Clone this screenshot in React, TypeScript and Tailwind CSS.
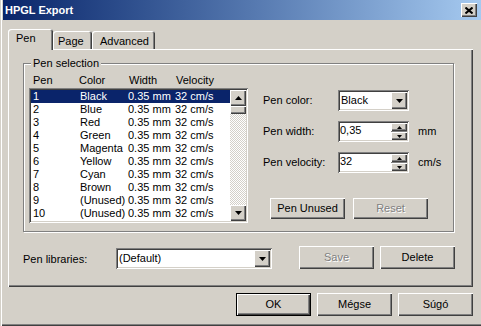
import React from 'react';

const raised = 'shadow-[inset_1px_1px_#fff,inset_-1px_-1px_#404040,inset_-2px_-2px_#808080]';
const sunken = 'shadow-[inset_1px_1px_#808080,inset_-1px_-1px_#fff,inset_2px_2px_#404040,inset_-2px_-2px_#d4d0c8]';

const pens = [
  ['1', 'Black'],
  ['2', 'Blue'],
  ['3', 'Red'],
  ['4', 'Green'],
  ['5', 'Magenta'],
  ['6', 'Yellow'],
  ['7', 'Cyan'],
  ['8', 'Brown'],
  ['9', '(Unused)'],
  ['10', '(Unused)'],
];

const Arrow = ({ up = false, w = 7, h = 4 }: { up?: boolean; w?: number; h?: number }) => (
  <svg width={w} height={h} viewBox={`0 0 ${w} ${h}`}>
    <polygon points={up ? `0,${h} ${w},${h} ${w / 2},0` : `0,0 ${w},0 ${w / 2},${h}`} fill="#000" />
  </svg>
);

const Button = ({ label, disabled, w = 'w-[75px]', h = 'h-[23px]' }: { label: string; disabled?: boolean; w?: string; h?: string }) => (
  <div className={`${w} ${h} ${raised} bg-[#d4d0c8] flex items-center justify-center font-normal`}>
    <span className={disabled ? 'text-[#808080] [text-shadow:1px_1px_#fff]' : 'text-black'}>{label}</span>
  </div>
);

const Combo = ({ value, w }: { value: string; w: string }) => (
  <div className={`${w} h-[21px] bg-white ${sunken} flex items-center pl-[3px] pr-[2px]`}>
    <span className="flex-1">{value}</span>
    <div className={`w-[16px] h-[17px] bg-[#d4d0c8] ${raised} flex items-center justify-center`}>
      <Arrow />
    </div>
  </div>
);

const Spinner = ({ value }: { value: string }) => (
  <div className={`w-[71px] h-[21px] bg-white ${sunken} flex pl-[2px] pr-[2px] py-[2px]`}>
    <span className="flex-1 pt-[1px]">{value}</span>
    <div className="w-[16px] flex flex-col">
      <div className={`h-[8px] bg-[#d4d0c8] ${raised} flex items-center justify-center`}>
        <Arrow up w={5} h={3} />
      </div>
      <div className="h-[1px] bg-[#808080]" />
      <div className={`h-[8px] bg-[#d4d0c8] ${raised} flex items-center justify-center`}>
        <Arrow w={5} h={3} />
      </div>
    </div>
  </div>
);

export default function App() {
  return (
    <div className="w-[481px] h-[326px] bg-[#d4d0c8] pl-[3px] font-['Liberation_Sans',Arial,sans-serif] text-[11px] leading-[13px] text-black shadow-[inset_1px_0_#d4d0c8,inset_2px_0_#fff,inset_0_-1px_#404040,inset_0_-2px_#808080] overflow-hidden">

      {/* Title bar */}
      <div className="h-[20px] bg-linear-to-r from-[#0a246a] to-[#a6caf0] flex items-center pl-[2px] pr-[4px]">
        <span className="flex-1 text-white font-bold">HPGL Export</span>
        <div className={`w-[16px] h-[14px] bg-[#d4d0c8] ${raised} flex items-center justify-center`}>
          <svg width="8" height="7" viewBox="0 0 8 7">
            <path d="M0.5 0.5 L7.5 6.5 M7.5 0.5 L0.5 6.5" stroke="#000" strokeWidth="2" />
          </svg>
        </div>
      </div>

      {/* Tabs */}
      <div className="mt-[9px] ml-[5px] h-[20px] flex items-end">
        <div className="relative z-10 w-[45px] h-[21px] -mb-[1px] bg-[#d4d0c8] rounded-t-[3px] shadow-[inset_1px_1px_#fff,inset_-1px_0_#404040,inset_-2px_0_#808080] pl-[8px] pt-[3px]">Pen</div>
        <div className="w-[39px] h-[18px] rounded-t-[3px] shadow-[inset_1px_1px_#fff,inset_-1px_0_#404040,inset_-2px_0_#808080] pl-[5px] pt-[4px]">Page</div>
        <div className="w-[63px] h-[18px] rounded-t-[3px] shadow-[inset_1px_1px_#fff,inset_-1px_0_#404040,inset_-2px_0_#808080] pl-[8px] pt-[4px]">Advanced</div>
      </div>

      {/* Tab panel */}
      <div className={`ml-[5px] w-[465px] h-[238px] ${raised} pl-[15px] pt-[14px]`}>

        {/* Pen selection group */}
        <div className="relative w-[431px] h-[169px] border border-[#808080] shadow-[inset_1px_1px_#fff,1px_1px_#fff] flex">
          <span className="absolute left-[7px] -top-[7px] bg-[#d4d0c8] px-[2px]">Pen selection</span>

          <div className="pl-[5px] pt-[10px]">
            <div className="flex pl-[4px] h-[13px]">
              <span className="w-[46px]">Pen</span>
              <span className="w-[50px]">Color</span>
              <span className="w-[47px]">Width</span>
              <span>Velocity</span>
            </div>
            <div className={`mt-[1px] w-[219px] h-[135px] bg-white ${sunken} p-[2px] flex`}>
              <div className="flex-1">
                {pens.map(([n, c], i) => (
                  <div key={n} className={`flex h-[13px] pl-[2px] ${i === 0 ? 'bg-[#0a246a] text-white' : ''}`}>
                    <span className="w-[47px]">{n}</span>
                    <span className="w-[48px]">{c}</span>
                    <span className="w-[47px]">0.35 mm</span>
                    <span>32 cm/s</span>
                  </div>
                ))}
              </div>
              <div className="w-[16px] flex flex-col">
                <div className={`h-[16px] bg-[#d4d0c8] ${raised} flex items-center justify-center`}>
                  <Arrow up />
                </div>
                <div className={`h-[8px] bg-[#d4d0c8] ${raised}`} />
                <div className="flex-1 bg-[image:repeating-conic-gradient(#fff_0%_25%,#d4d0c8_0%_50%)] bg-[length:2px_2px]" />
                <div className={`h-[16px] bg-[#d4d0c8] ${raised} flex items-center justify-center`}>
                  <Arrow />
                </div>
              </div>
            </div>
          </div>

          <div className="ml-[15px] pt-[26px] flex flex-col">
            <div className="flex items-center">
              <span className="w-[75px]">Pen color:</span>
              <Combo value="Black" w="w-[71px]" />
            </div>
            <div className="flex items-center mt-[10px]">
              <span className="w-[75px]">Pen width:</span>
              <Spinner value="0,35" />
              <span className="ml-[9px]">mm</span>
            </div>
            <div className="flex items-center mt-[10px]">
              <span className="w-[75px]">Pen velocity:</span>
              <Spinner value="32" />
              <span className="ml-[9px]">cm/s</span>
            </div>
            <div className="flex gap-[8px] ml-[7px] mt-[25px]">
              <Button label="Pen Unused" h="h-[21px]" />
              <Button label="Reset" h="h-[21px]" disabled />
            </div>
          </div>
        </div>

        {/* Pen libraries */}
        <div className="flex items-end mt-[14px]">
          <span className="w-[93px] pb-[3px]">Pen libraries:</span>
          <Combo value="(Default)" w="w-[156px]" />
          <div className="ml-[27px]"><Button label="Save" disabled /></div>
          <div className="ml-[6px]"><Button label="Delete" /></div>
        </div>
      </div>

      {/* Dialog buttons */}
      <div className="mt-[6px] pr-[8px] flex justify-end gap-[6px]">
        <div className="border border-black"><Button label="OK" w="w-[73px]" h="h-[21px]" /></div>
        <Button label="Mégse" />
        <Button label="Súgó" />
      </div>
    </div>
  );
}
